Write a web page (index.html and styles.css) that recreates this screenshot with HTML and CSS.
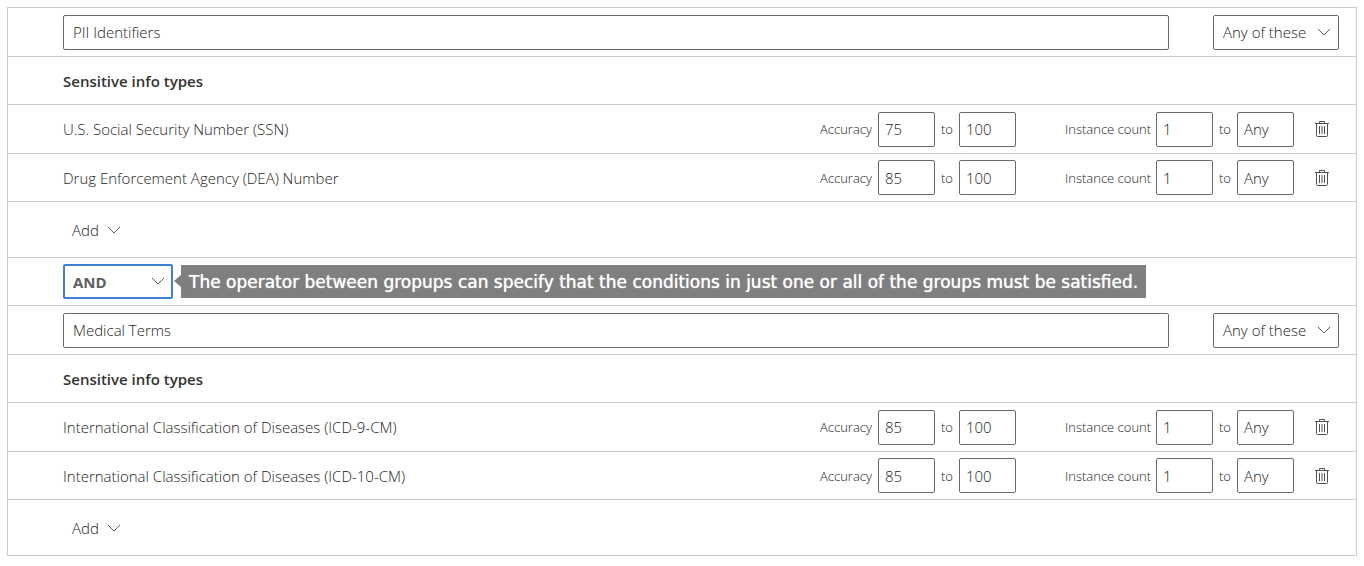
FILE: index.html
```
<!DOCTYPE html>
<html lang="en">
<head>
<meta charset="utf-8">
<title>Sensitive info groups</title>
<meta name="viewport" content="width=device-width, initial-scale=1">
<link rel="stylesheet" href="styles.css">
</head>
<body>
<svg class="sprite" aria-hidden="true">
  <symbol id="chevron" viewBox="0 0 14 8"><path d="M1 1l6 6 6-6" fill="none" stroke="currentColor"/></symbol>
  <symbol id="trash" viewBox="0 0 14 18"><path d="M0 3.5h14M4.5 3.5v-2h5v2M1.5 3.5v12q0 1 1 1h9q1 0 1-1v-12M4.5 6v8M7 6v8M9.5 6v8" fill="none" stroke="currentColor"/></symbol>
</svg>
<main class="card">
  <section class="group">
    <div class="row title">
      <input class="field name" type="text" aria-label="Group name" value="PII Identifiers">
      <div class="picker">
        <select class="field" aria-label="Match"><option>Any of these</option><option>All of these</option></select>
        <svg class="chevron"><use href="#chevron"/></svg>
      </div>
    </div>
    <div class="row"><h2 class="heading">Sensitive info types</h2></div>
    <div class="row item">
      <span class="type">U.S. Social Security Number (SSN)</span>
      <div class="range"><label class="label accuracy" for="a1">Accuracy</label><input class="field" id="a1" value="75"><label class="label to" for="a2">to</label><input class="field" id="a2" value="100"></div>
      <div class="range"><label class="label count" for="c1">Instance count</label><input class="field" id="c1" value="1"><label class="label to" for="c2">to</label><input class="field" id="c2" value="Any"></div>
      <button class="delete" type="button" aria-label="Delete"><svg><use href="#trash"/></svg></button>
    </div>
    <div class="row item">
      <span class="type">Drug Enforcement Agency (DEA) Number</span>
      <div class="range"><label class="label accuracy" for="a3">Accuracy</label><input class="field" id="a3" value="85"><label class="label to" for="a4">to</label><input class="field" id="a4" value="100"></div>
      <div class="range"><label class="label count" for="c3">Instance count</label><input class="field" id="c3" value="1"><label class="label to" for="c4">to</label><input class="field" id="c4" value="Any"></div>
      <button class="delete" type="button" aria-label="Delete"><svg><use href="#trash"/></svg></button>
    </div>
    <div class="row footer"><button class="add" type="button">Add <svg class="chevron"><use href="#chevron"/></svg></button></div>
  </section>

  <div class="row operator">
    <div class="picker active">
      <select class="field" aria-label="Operator between groups" aria-describedby="tip"><option>AND</option><option>OR</option></select>
      <svg class="chevron"><use href="#chevron"/></svg>
    </div>
    <div class="tip" id="tip" role="tooltip">The operator between gropups can specify that the conditions in just one or all of the groups must be satisfied.</div>
  </div>

  <section class="group">
    <div class="row title">
      <input class="field name" type="text" aria-label="Group name" value="Medical Terms">
      <div class="picker">
        <select class="field" aria-label="Match"><option>Any of these</option><option>All of these</option></select>
        <svg class="chevron"><use href="#chevron"/></svg>
      </div>
    </div>
    <div class="row"><h2 class="heading">Sensitive info types</h2></div>
    <div class="row item">
      <span class="type">International Classification of Diseases (ICD-9-CM)</span>
      <div class="range"><label class="label accuracy" for="a5">Accuracy</label><input class="field" id="a5" value="85"><label class="label to" for="a6">to</label><input class="field" id="a6" value="100"></div>
      <div class="range"><label class="label count" for="c5">Instance count</label><input class="field" id="c5" value="1"><label class="label to" for="c6">to</label><input class="field" id="c6" value="Any"></div>
      <button class="delete" type="button" aria-label="Delete"><svg><use href="#trash"/></svg></button>
    </div>
    <div class="row item">
      <span class="type">International Classification of Diseases (ICD-10-CM)</span>
      <div class="range"><label class="label accuracy" for="a7">Accuracy</label><input class="field" id="a7" value="85"><label class="label to" for="a8">to</label><input class="field" id="a8" value="100"></div>
      <div class="range"><label class="label count" for="c7">Instance count</label><input class="field" id="c7" value="1"><label class="label to" for="c8">to</label><input class="field" id="c8" value="Any"></div>
      <button class="delete" type="button" aria-label="Delete"><svg><use href="#trash"/></svg></button>
    </div>
    <div class="row footer"><button class="add" type="button">Add <svg class="chevron"><use href="#chevron"/></svg></button></div>
  </section>
</main>
</body>
</html>
```
FILE: styles.css
```
* { box-sizing: border-box; }

body {
  margin: 7px;
  background: #fff;
  color: #1c1c1c;
  font: 300 15px/20px "Open Sans", "Noto Sans", sans-serif;
}

.sprite { position: absolute; width: 0; height: 0; }

.card { border: 1px solid #ccc; border-bottom: 0; }

.row {
  display: flex;
  align-items: center;
  min-height: 48px;
  padding: 6px 17px 6px 55px;
  border-bottom: 1px solid #ccc;
}

.title { gap: 44px; min-height: 49px; }
.item { min-height: 49px; padding-right: 20px; }
.item + .item { min-height: 48px; }
.footer { min-height: 56px; }

.heading {
  margin: 0;
  color: #333;
  font-size: 15px;
  font-weight: 600;
  line-height: 20px;
}

.field {
  width: 57px;
  height: 35px;
  padding: 0 6px;
  border: 1px solid #6a6a6a;
  border-radius: 2px;
  background: #fff;
  color: inherit;
  font: inherit;
}

.name { flex: 1; min-width: 0; padding: 0 9px; }
.type { flex: 1; }

.picker { position: relative; flex: none; width: 126px; }
.picker .field { display: block; width: 100%; padding: 0 9px; appearance: none; }
.picker .chevron { position: absolute; top: 13px; right: 8px; pointer-events: none; }
.chevron { flex: none; width: 14px; height: 8px; color: #606060; }

.active { width: 110px; }
.active .field { border: 2px solid #4080d0; padding: 0 8px; font-weight: 700; color: #606060; }

.range { display: flex; align-items: center; gap: 6px; }
.range + .range { margin-left: 49px; }
.label { font-size: 13px; white-space: nowrap; }
.accuracy { width: 52px; }
.count { width: 85px; }
.to { width: 12px; }

.delete {
  display: flex;
  justify-content: center;
  width: 28px;
  margin-left: 14px;
  padding: 6px 0;
  border: 0;
  background: none;
  color: #505050;
}
.delete svg { width: 14px; height: 18px; }

.add {
  display: flex;
  align-items: center;
  gap: 8px;
  margin-left: 9px;
  padding: 4px 0;
  border: 0;
  background: none;
  color: inherit;
  font: inherit;
}

.operator { gap: 8px; }
.tip {
  position: relative;
  padding: 7px 8px 5px;
  background: #7f7f7f;
  color: #fff;
  font: 400 17px/21px "DejaVu Sans", sans-serif;
  text-shadow: 0 0 1px #fff;
}
.tip::before {
  content: "";
  position: absolute;
  top: 10px;
  left: -7px;
  border: 6px solid transparent;
  border-right: 7px solid #7f7f7f;
  border-left: 0;
}
```
